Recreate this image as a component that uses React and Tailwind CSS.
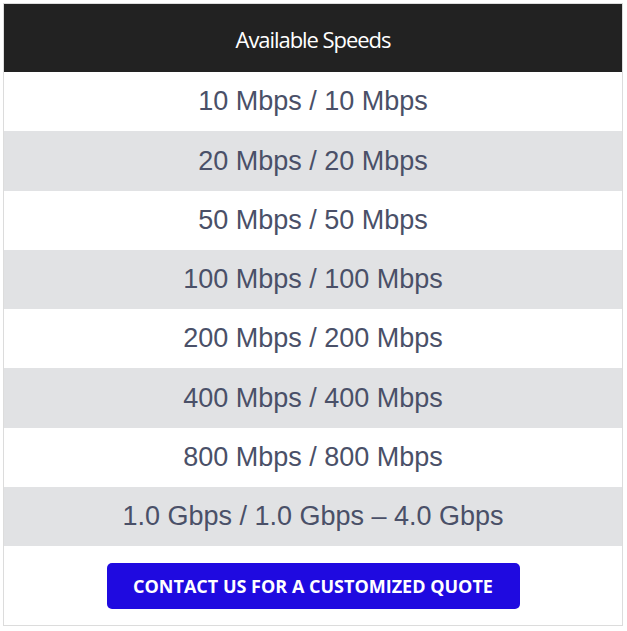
export default function App() {
  const rows = [
    "10 Mbps / 10 Mbps",
    "20 Mbps / 20 Mbps",
    "50 Mbps / 50 Mbps",
    "100 Mbps / 100 Mbps",
    "200 Mbps / 200 Mbps",
    "400 Mbps / 400 Mbps",
    "800 Mbps / 800 Mbps",
    "1.0 Gbps / 1.0 Gbps – 4.0 Gbps",
  ];
  return (
    <div className="w-[627px] h-[631px] bg-white pt-[3px] pl-[3px]">
      <div className="w-[620px] h-[623px] border border-[#dcdcdc] flex flex-col">
        <div className="h-[68px] bg-[#222222] flex items-center justify-center pt-[2px]">
          <span className="text-white text-[22px] tracking-[-1.05px] font-['Open_Sans',sans-serif]">
            Available Speeds
          </span>
        </div>
        {rows.map((r, i) => (
          <div
            key={i}
            className={`h-[59.25px] flex items-center justify-center text-[27px] text-[#4a5068] font-['Liberation_Sans',Arial,sans-serif] ${
              i % 2 === 1 ? "bg-[#e1e2e4]" : "bg-white"
            }`}
          >
            {r}
          </div>
        ))}
        <div className="flex-1 flex items-start justify-center pt-[17px]">
          <button className="w-[413px] h-[46px] rounded-[5px] bg-[#1f0ae0] text-white font-bold text-[18px] font-['Open_Sans',sans-serif] uppercase">
            Contact us for a customized quote
          </button>
        </div>
      </div>
    </div>
  );
}
